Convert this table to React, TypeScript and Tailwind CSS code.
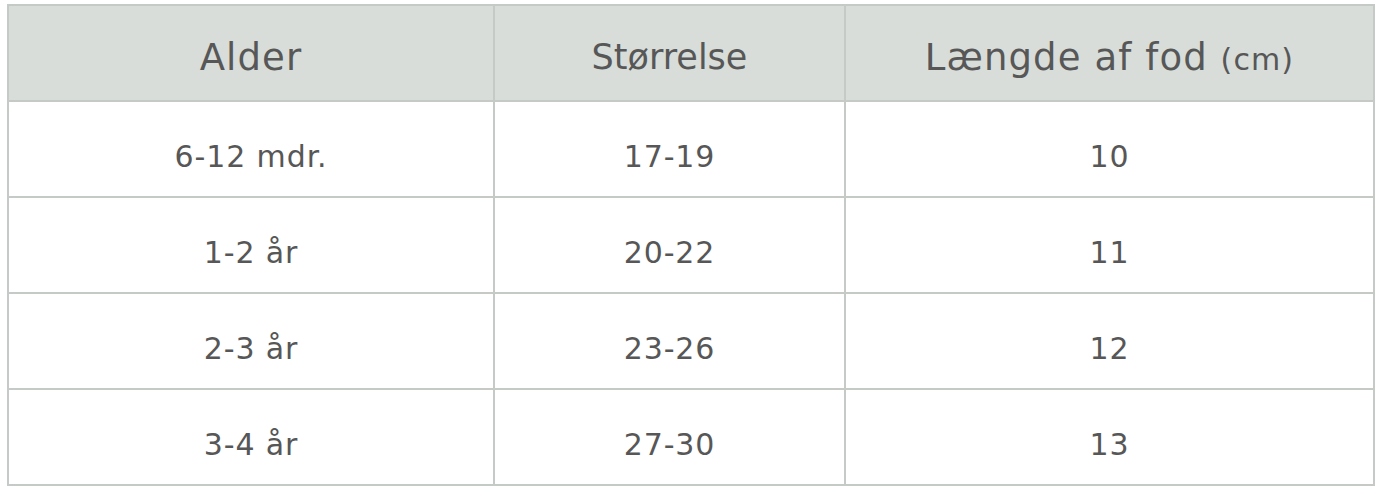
const rows = [
  { age: '6-12 mdr.', size: '17-19', length: '10' },
  { age: '1-2 år', size: '20-22', length: '11' },
  { age: '2-3 år', size: '23-26', length: '12' },
  { age: '3-4 år', size: '27-30', length: '13' },
];

export default function App() {
  return (
    <div className="w-[1382px] h-[497px] bg-white pl-[7px] pt-[4px] font-['DejaVu_Sans',sans-serif] text-[#575757]">
      <table className="table-fixed border-collapse w-[1366px]">
        <colgroup>
          <col className="w-[486px]" />
          <col className="w-[351px]" />
          <col className="w-[529px]" />
        </colgroup>
        <thead>
          <tr className="h-[96px] bg-[#d8ddd9]">
            <th className="border-2 border-[#c6cac7] font-normal text-[37px] tracking-[0.03em] pt-[9px] text-center">Alder</th>
            <th className="border-2 border-[#c6cac7] font-normal text-[35px] pt-[9px] text-center">Størrelse</th>
            <th className="border-2 border-[#c6cac7] font-normal text-[37px] tracking-[0.03em] pt-[9px] text-center">
              Længde af fod <span className="text-[30px]">(cm)</span>
            </th>
          </tr>
        </thead>
        <tbody>
          {rows.map((r) => (
            <tr key={r.age} className="h-[96px]">
              <td className="border-2 border-[#c6cac7] text-[30px] tracking-[0.03em] pt-[14px] text-center">{r.age}</td>
              <td className="border-2 border-[#c6cac7] text-[30px] tracking-[0.03em] pt-[14px] text-center">{r.size}</td>
              <td className="border-2 border-[#c6cac7] text-[30px] tracking-[0.03em] pt-[14px] text-center">{r.length}</td>
            </tr>
          ))}
        </tbody>
      </table>
    </div>
  );
}
